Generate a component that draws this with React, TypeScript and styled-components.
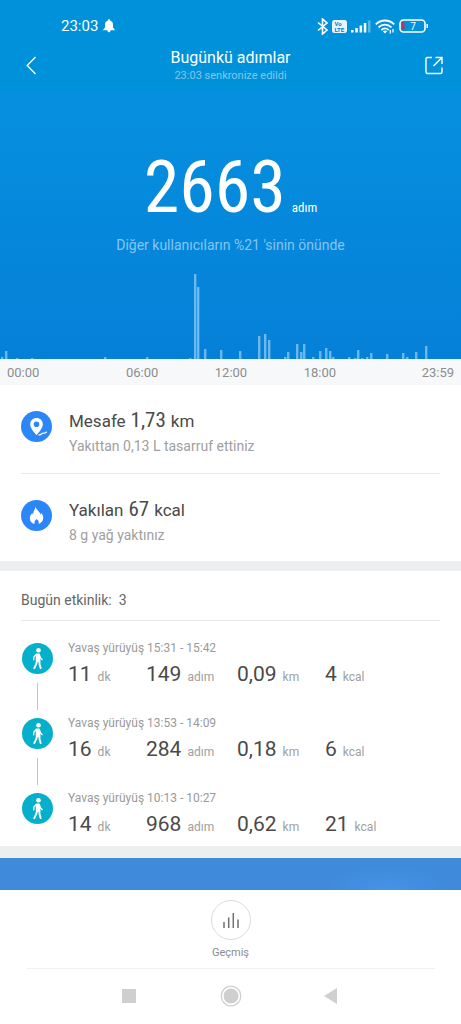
import React from "react";
import styled, { createGlobalStyle } from "styled-components";

const GlobalStyle = createGlobalStyle`
  * { box-sizing: border-box; }
  body { margin: 0; background: #fff; font-family: Roboto, "Noto Sans", sans-serif; color: #4a4a4a; }
  h1, h2, p { margin: 0; font-weight: 400; }
  button { border: 0; padding: 0; background: none; font: inherit; color: inherit; cursor: pointer; }
  svg { display: block; }
`;

const narrow = `"Roboto Condensed", Roboto, sans-serif`;

const Screen = styled.div`
  display: flex;
  flex-direction: column;
  min-height: 100vh;
`;

const TopBar = styled.header`
  height: 92px;
  background: #0091db;
  color: #fff;
`;

const StatusBar = styled.div`
  display: flex;
  justify-content: space-between;
  align-items: center;
  height: 44px;
  padding: 8px 32px 0 61px;
`;

const StatusGroup = styled.div<{ $gap: number }>`
  display: flex;
  align-items: center;
  gap: ${(p) => p.$gap}px;
  font-size: 15px;
  line-height: 18px;
`;

const TitleBar = styled.div`
  display: grid;
  grid-template-columns: 24px 1fr 24px;
  align-items: center;
  padding: 4px 17px 0;
  text-align: center;
`;

const Title = styled.h1`
  font-size: 16px;
  line-height: 20px;
`;

const Synced = styled.p`
  font-size: 11px;
  line-height: 16px;
  color: #80c8ed;
`;

const Hero = styled.section`
  display: flex;
  flex-direction: column;
  justify-content: space-between;
  height: 267px;
  padding-top: 60px;
  background: linear-gradient(#0690df, #0580d8);
  color: #fff;
`;

const StepTotal = styled.p`
  display: flex;
  justify-content: center;
  align-items: baseline;
  gap: 6px;
  line-height: 72px;
`;

const StepCount = styled.span`
  font-family: ${narrow};
  font-size: 72px;
`;

const StepUnit = styled.span`
  font-family: ${narrow};
  font-size: 13px;
  line-height: 16px;
`;

const Rank = styled.p`
  margin-top: 12px;
  font-size: 14px;
  line-height: 18px;
  text-align: center;
  color: #84c6f0;
`;

const Chart = styled.svg`
  width: 100%;
  height: 88px;
`;

const Axis = styled.div`
  display: grid;
  grid-template-columns: 119fr 89fr 89fr 118fr auto;
  padding: 5px 7px 3px;
  background: #f7f8f9;
  font-size: 13px;
  line-height: 18px;
  color: #8b8d90;
`;

const Summary = styled.section`
  padding: 0 21px;
`;

const SummaryRow = styled.div`
  display: flex;
  gap: 17px;
  height: 88px;
  padding-top: 19px;
  & + & { border-top: 1px solid #e9e9e9; }
`;

const Disc = styled.span<{ $color: string }>`
  display: block;
  flex: none;
  width: 31px;
  height: 31px;
  border-radius: 50%;
  background: ${(p) => p.$color};
`;

const DiscOffset = styled.div`
  padding-top: 7px;
`;

const SummaryTitle = styled.h2`
  display: flex;
  align-items: baseline;
  gap: 5px;
  font-size: 17px;
  line-height: 32px;
  color: #4a4a4a;
`;

const SummaryValue = styled.span`
  font-family: ${narrow};
  font-size: 21px;
`;

const SummaryNote = styled.p`
  font-size: 14px;
  line-height: 18px;
  color: #a0a0a0;
`;

const Band = styled.div<{ $height: number }>`
  height: ${(p) => p.$height}px;
  background: #eceeef;
`;

const Activities = styled.section`
  padding: 0 21px;
`;

const ActivitiesTitle = styled.h2`
  display: flex;
  align-items: center;
  gap: 7px;
  height: 50px;
  padding-top: 8px;
  border-bottom: 1px solid #e9e9e9;
  font-size: 14px;
  color: #666;
`;

const ActivityList = styled.ul`
  margin: 0;
  padding: 19px 0 0;
  list-style: none;
`;

const Activity = styled.li`
  display: flex;
  gap: 15px;
  height: 75px;
  &:last-child { height: 56px; }
`;

const Track = styled.div`
  display: flex;
  flex-direction: column;
  align-items: center;
  flex: none;
  width: 32px;
  padding-top: 3px;
`;

const Link = styled.span`
  width: 1px;
  height: 27px;
  margin-top: 9px;
  background: #c4c4c4;
`;

const ActivityBody = styled.div`
  flex: 1;
`;

const ActivityName = styled.p`
  font-size: 12px;
  line-height: 16px;
  color: #9a9a9a;
`;

const Stats = styled.div`
  display: grid;
  grid-template-columns: 78fr 91fr 88fr 115fr;
  margin-top: 6px;
`;

const Stat = styled.span`
  display: flex;
  align-items: baseline;
  gap: 6px;
  font-size: 21px;
  line-height: 24px;
`;

const StatUnit = styled.small`
  font-size: 12px;
  color: #a0a0a0;
`;

const Promo = styled.div`
  height: 32px;
  background: radial-gradient(60px 24px at 84% 100%, #4593e8, #3f8adb);
`;

const Footer = styled.footer`
  display: flex;
  justify-content: center;
  height: 79px;
  margin: 0 26px;
  padding-top: 10px;
  border-bottom: 1px solid #f1f1f1;
`;

const HistoryButton = styled.button`
  display: flex;
  flex-direction: column;
  align-items: center;
  gap: 5px;
  font-size: 11px;
  line-height: 16px;
  color: #8c8c8c;
`;

const HistoryRing = styled.span`
  display: flex;
  align-items: center;
  justify-content: center;
  width: 40px;
  height: 40px;
  border: 1px solid #dcdcdc;
  border-radius: 50%;
`;

const NavBar = styled.nav`
  display: flex;
  justify-content: center;
  align-items: center;
  gap: 78px;
  height: 54px;
`;

const bars: [number, number][] = [
  [2, 2], [6, 8], [17, 1], [32, 1], [105, 2], [147, 2], [190, 1], [195, 85], [198, 72], [205, 10], [221, 9],
  [240, 8], [259, 23], [265, 25], [269, 19], [285, 2], [288, 7], [297, 15], [301, 7], [304, 15], [313, 2],
  [320, 8], [326, 11], [330, 8], [333, 2], [349, 2], [355, 1], [358, 9], [362, 1], [367, 2], [371, 6],
  [387, 5], [403, 6], [407, 2], [416, 7], [426, 13],
];

const activities = [
  { time: "15:31 - 15:42", dk: "11", steps: "149", km: "0,09", kcal: "4" },
  { time: "13:53 - 14:09", dk: "16", steps: "284", km: "0,18", kcal: "6" },
  { time: "10:13 - 10:27", dk: "14", steps: "968", km: "0,62", kcal: "21" },
];

const BellIcon = () => (
  <svg width="12" height="14" viewBox="0 0 12 14" fill="#fff">
    <path d="M6 0.300c.7 0 1.100.5 1.100 1.100C9 2 10 3.600 10 5.500v3l1.700 2v.8H.3v-.8l1.700-2v-3C2 3.600 3 2 4.900 1.400 4.900.8 5.300.3 6 .3zM4.300 11h3.400c-.2 1.500-.9 2.300-1.700 2.300S4.500 12.500 4.300 11z" />
  </svg>
);

const BluetoothIcon = () => (
  <svg width="11" height="17" viewBox="0 0 11 17" fill="none" stroke="#fff" strokeWidth="1.600">
    <path d="M1 4.500l9 7.500-4.500 4V1L10 5l-9 7.500" />
  </svg>
);

const VolteIcon = () => (
  <svg width="15" height="13" viewBox="0 0 15 13">
    <rect width="15" height="13" rx="2.500" fill="#e6f5fc" />
    <text x="2.500" y="6" fontSize="6" fontWeight="700" fill="#0083c8">Vo</text>
    <text x="2.500" y="12" fontSize="6" fontWeight="700" fill="#0083c8">LTE</text>
  </svg>
);

const SignalIcon = () => (
  <svg width="20" height="13" viewBox="0 0 20 13" fill="#fff">
    <rect x="0" y="10" width="2.500" height="2.500" />
    <rect x="4.300" y="8" width="2.500" height="4.500" />
    <rect x="8.600" y="5.500" width="2.500" height="7" />
    <rect x="12.800" y="3" width="2.500" height="9.500" />
    <rect x="17" y="0.500" width="2.500" height="12" opacity=".35" />
  </svg>
);

const WifiIcon = () => (
  <svg width="20" height="15" viewBox="0 0 20 15" fill="none" stroke="#fff" strokeWidth="1.800">
    <path d="M.8 5.400c5.300-5.200 13.100-5.200 18.400 0M3.500 8.300c3.900-3.700 9.100-3.700 13 0M6.300 11c2.300-2 5.100-2 7.400 0" />
    <path d="M10 14.600l-2.200-2.400c1.300-1 3.100-1 4.400 0z" fill="#fff" stroke="none" />
    <path d="M15.300 11v3.500M18 10v3.500" strokeWidth="1.300" />
  </svg>
);

const BatteryIcon = () => (
  <svg width="30" height="14" viewBox="0 0 30 14">
    <rect x="1" y="1" width="25" height="12" rx="3.500" fill="none" stroke="#fff" strokeWidth="1.600" />
    <path d="M27.500 5h1.500v4h-1.500z" fill="#fff" />
    <rect x="3" y="3" width="2.500" height="8" rx="1" fill="#b8365b" />
    <text x="14" y="10.500" fontSize="10" textAnchor="middle" fill="#fff">7</text>
  </svg>
);

const BackIcon = () => (
  <svg width="24" height="24" viewBox="0 0 24 24" fill="none" stroke="#fff" strokeWidth="1.300">
    <path d="M18.500 3L10.200 11.500l8.300 8.500" />
  </svg>
);

const ShareIcon = () => (
  <svg width="24" height="24" viewBox="0 0 24 24" fill="none" stroke="#fff" strokeWidth="1.400">
    <path d="M12 3.500H7.500Q6 3.500 6 5v13q0 1.500 1.500 1.500h13q1.500 0 1.500-1.500V13.500M15.500 3.500H22V10M22 3.500L13.500 12" />
  </svg>
);

const PinIcon = () => (
  <svg width="31" height="31" viewBox="0 0 31 31">
    <path fillRule="evenodd" fill="#fff" d="M15.500 7c3.600 0 6.300 2.700 6.300 6.200 0 3.900-3.800 7.800-6.300 11-2.500-3.200-6.300-7.100-6.300-11C9.200 9.700 11.900 7 15.500 7zm0 3.500a2.800 2.800 0 1 0 0 5.600 2.800 2.800 0 0 0 0-5.600z" />
    <path d="M17.500 23.700c3 .9 2.600-1.800 5-1.500 1.800.3 1.700-1.200 3.500-1.200" fill="none" stroke="#fff" strokeWidth="1.200" />
  </svg>
);

const FlameIcon = () => (
  <svg width="31" height="31" viewBox="0 0 31 31">
    <path fill="#fff" d="M14.500 6.500c.3 3 4 4.500 5 8 .5-.5.700-1 .7-1.700 1.300 1.500 2 3.200 2 5 0 3.300-2 5.400-4.500 6.200.3-2-.2-3.600-2-5-1.900 1.400-2.500 3-2.200 5-2.800-.7-4.700-3-4.700-5.800 0-2.200 1.300-3.600 2.400-5.200.3.900.5 1.400 1 1.800C11.700 11.700 14.200 10 14.500 6.500z" />
  </svg>
);

const WalkIcon = () => (
  <svg width="31" height="31" viewBox="0 0 31 31" fill="none" stroke="#fff" strokeLinecap="round" strokeLinejoin="round">
    <circle cx="16.500" cy="7.300" r="2.300" fill="#fff" stroke="none" />
    <path d="M14.500 11.200h2.700l.6 7h-3.300z" fill="#fff" strokeWidth="1.400" />
    <path d="M14.300 11.500L12 13.800l-.3 3M17.500 12l1 3 1.600 1.500" strokeWidth="1.300" />
    <path d="M15 18l-.8 3.200-1.900 3.900M17.300 18l.3 3.500 1.100 3.600" strokeWidth="1.900" />
  </svg>
);

const HistoryIcon = () => (
  <svg width="18" height="18" viewBox="0 0 18 18" stroke="#707070" strokeWidth="1.500">
    <path d="M2 11v6M6.700 6.500V17M11.300 2v15M16 8.500V17" />
  </svg>
);

function StatItem({ value, unit }: { value: string; unit: string }) {
  return (
    <Stat>
      {value}
      <StatUnit>{unit}</StatUnit>
    </Stat>
  );
}

export default function App() {
  return (
    <Screen>
      <GlobalStyle />
      <TopBar>
        <StatusBar>
          <StatusGroup $gap={5}>
            23:03
            <BellIcon />
          </StatusGroup>
          <StatusGroup $gap={4}>
            <BluetoothIcon />
            <VolteIcon />
            <SignalIcon />
            <WifiIcon />
            <BatteryIcon />
          </StatusGroup>
        </StatusBar>
        <TitleBar>
          <button aria-label="Geri"><BackIcon /></button>
          <div>
            <Title>Bugünkü adımlar</Title>
            <Synced>23:03 senkronize edildi</Synced>
          </div>
          <button aria-label="Paylaş"><ShareIcon /></button>
        </TitleBar>
      </TopBar>

      <Hero>
        <div>
          <StepTotal>
            <StepCount>2663</StepCount>
            <StepUnit>adım</StepUnit>
          </StepTotal>
          <Rank>Diğer kullanıcıların %21 'sinin önünde</Rank>
        </div>
        <Chart viewBox="0 0 461 88" preserveAspectRatio="none" fill="#6bb8ee">
          {bars.map(([x, h]) => (
            <rect key={x} x={x - 1} y={88 - h} width="2.400" height={h} />
          ))}
        </Chart>
      </Hero>
      <Axis>
        <span>00:00</span>
        <span>06:00</span>
        <span>12:00</span>
        <span>18:00</span>
        <span>23:59</span>
      </Axis>

      <Summary>
        <SummaryRow>
          <DiscOffset><Disc $color="#2b87f8"><PinIcon /></Disc></DiscOffset>
          <div>
            <SummaryTitle>Mesafe <SummaryValue>1,73</SummaryValue> km</SummaryTitle>
            <SummaryNote>Yakıttan 0,13 L tasarruf ettiniz</SummaryNote>
          </div>
        </SummaryRow>
        <SummaryRow>
          <DiscOffset><Disc $color="#2b87f8"><FlameIcon /></Disc></DiscOffset>
          <div>
            <SummaryTitle>Yakılan <SummaryValue>67</SummaryValue> kcal</SummaryTitle>
            <SummaryNote>8 g yağ yaktınız</SummaryNote>
          </div>
        </SummaryRow>
      </Summary>
      <Band $height={10} />

      <Activities>
        <ActivitiesTitle>Bugün etkinlik: <span>3</span></ActivitiesTitle>
        <ActivityList>
          {activities.map((a, i) => (
            <Activity key={a.time}>
              <Track>
                <Disc $color="#06afca"><WalkIcon /></Disc>
                {i < activities.length - 1 && <Link />}
              </Track>
              <ActivityBody>
                <ActivityName>Yavaş yürüyüş {a.time}</ActivityName>
                <Stats>
                  <StatItem value={a.dk} unit="dk" />
                  <StatItem value={a.steps} unit="adım" />
                  <StatItem value={a.km} unit="km" />
                  <StatItem value={a.kcal} unit="kcal" />
                </Stats>
              </ActivityBody>
            </Activity>
          ))}
        </ActivityList>
      </Activities>
      <Band $height={12} />
      <Promo />

      <Footer>
        <HistoryButton>
          <HistoryRing><HistoryIcon /></HistoryRing>
          Geçmiş
        </HistoryButton>
      </Footer>
      <NavBar>
        <button aria-label="Son uygulamalar">
          <svg width="24" height="24" viewBox="0 0 24 24" fill="#cfcfcf"><rect x="5" y="5" width="14" height="14" /></svg>
        </button>
        <button aria-label="Ana ekran">
          <svg width="24" height="24" viewBox="0 0 24 24" fill="#cfcfcf">
            <circle cx="12" cy="12" r="7.500" />
            <circle cx="12" cy="12" r="9.800" fill="none" stroke="#cfcfcf" strokeWidth="1.300" />
          </svg>
        </button>
        <button aria-label="Geri git">
          <svg width="24" height="24" viewBox="0 0 24 24" fill="#cfcfcf"><path d="M3 12l13-8v16z" /></svg>
        </button>
      </NavBar>
    </Screen>
  );
}
